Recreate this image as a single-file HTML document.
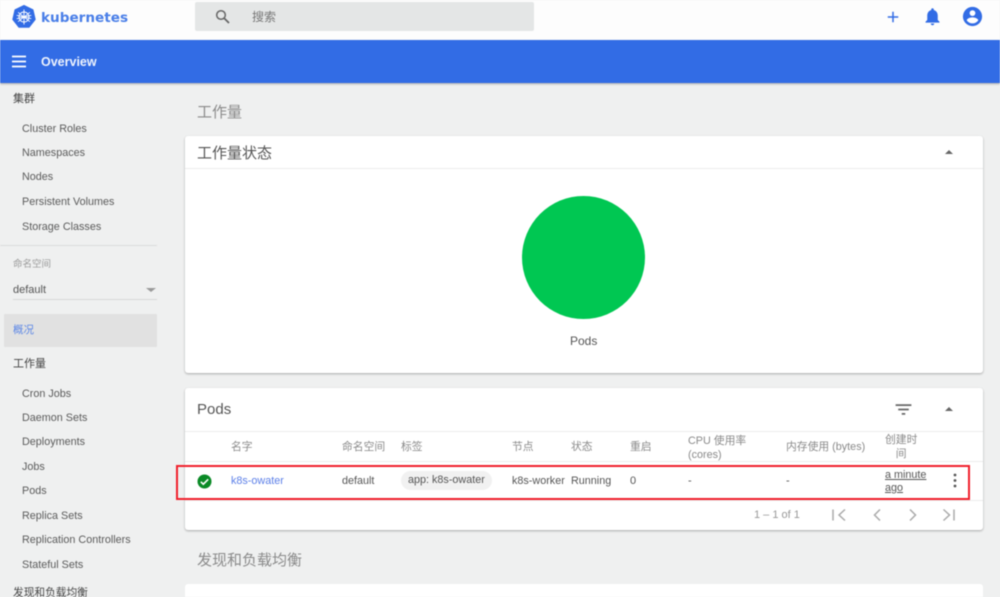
<!DOCTYPE html>
<html lang="zh"><head><meta charset="utf-8"><title>Kubernetes Dashboard</title>
<style>
html,body{margin:0;padding:0}
body{width:1000px;height:597px;overflow:hidden;position:relative;background:#eff0f0;font-family:"Liberation Sans","Noto Sans CJK SC",sans-serif;font-size:11px;color:#555}
#r{position:absolute;left:0;top:0;width:1000px;height:597px;overflow:hidden;filter:blur(.45px)}
.a,.a *{box-sizing:border-box}
.a{position:absolute;white-space:nowrap}
.side{color:#5b5b5b;font-size:10.800px;left:22px;line-height:14px;margin-top:1px}
.h{color:#444;font-size:11px;left:13px;line-height:14px}
.card{background:#fff;border-radius:3px;box-shadow:0 1px 2px rgba(0,0,0,.3)}
.th{color:#8a8a8a;font-size:10.800px;line-height:13px;margin-top:2px}
.td{color:#555;font-size:11px;line-height:14px;margin-top:1px}
</style></head><body><div id="r">
<div class="a" style="left:0;top:0;width:1000px;height:40px;background:#fdfdfd"></div>
<svg class="a" style="left:12px;top:5px" width="24" height="24" viewBox="0 0 24 24"><path d="M12 .5 21 4.800 23.200 14.500 17 22.300H7L.8 14.500 3 4.800Z" fill="#326ce5" stroke="#326ce5" stroke-linejoin="round"/><g stroke="#fff" fill="none" stroke-width=".9"><circle cx="12" cy="12" r="5"/><path d="M12 4.500V19.500M6.100 7.300 17.900 16.700M17.900 7.300 6.100 16.700M4.700 13.700 19.300 10.300M19.300 13.700 4.700 10.300"/></g><circle cx="12" cy="12" r="1.300" fill="#fff"/></svg>
<div class="a" style="left:41px;top:9px;font:bold 13.600px/18px 'DejaVu Sans',sans-serif;color:#4a7fe8">kubernetes</div>
<div class="a" style="left:195px;top:2px;width:339px;height:29px;background:#e4e6e6;border-radius:2px"></div>
<svg class="a" style="left:214px;top:8px" width="17" height="17" viewBox="0 0 17 17" fill="none" stroke="#666"><circle cx="7" cy="7" r="4.300" stroke-width="1.500"/><path d="M10.200 10.200 15 15" stroke-width="1.800"/></svg>
<div class="a" style="left:252px;top:10px;font-size:12px;line-height:15px;color:#777">搜索</div>
<svg class="a" style="left:884px;top:8px" width="18" height="18" viewBox="0 0 24 24"><path d="M19 13h-6v6h-2v-6H5v-2h6V5h2v6h6v2Z" fill="#326ce5"/></svg>
<svg class="a" style="left:922px;top:6px" width="21" height="21" viewBox="0 0 24 24"><path d="M12 22c1.100 0 2-.9 2-2h-4c0 1.100.9 2 2 2Zm6-6v-5c0-3.100-1.600-5.600-4.500-6.300V4c0-.8-.7-1.500-1.500-1.500S10.500 3.200 10.500 4v.7C7.600 5.400 6 7.900 6 11v5l-2 2v1h16v-1l-2-2Z" fill="#326ce5"/></svg>
<svg class="a" style="left:961px;top:5px" width="23" height="23" viewBox="0 0 24 24"><circle cx="12" cy="12" r="10" fill="#326ce5"/><circle cx="12" cy="8.500" r="3" fill="#fff"/><path d="M6 16c.03-2 4-3.100 6-3.100s5.970 1.100 6 3.100a7.200 7.200 0 0 1-12 0Z" fill="#fff"/></svg>

<div class="a" style="left:0;top:40px;width:1000px;height:43px;background:#326ce5;box-shadow:0 1px 2px rgba(0,0,0,.3)"></div>
<svg class="a" style="left:11px;top:55px" width="16" height="13" viewBox="0 0 16 13"><path d="M1 1.500H15M1 6.500H15M1 11.500H15" stroke="#fff" stroke-width="1.700"/></svg>
<div class="a" style="left:41px;top:54px;font:bold 12.500px/17px 'Liberation Sans',sans-serif;color:#eef3fd">Overview</div>

<div class="a h" style="top:92px">集群</div>
<div class="a side" style="top:121px">Cluster Roles</div>
<div class="a side" style="top:145px">Namespaces</div>
<div class="a side" style="top:169px">Nodes</div>
<div class="a side" style="top:194px">Persistent Volumes</div>
<div class="a side" style="top:218.500px">Storage Classes</div>
<div class="a" style="left:0;top:245px;width:157px;height:1px;background:#dcdcdc"></div>
<div class="a" style="left:13px;top:258px;font-size:9.500px;line-height:13px;color:#999">命名空间</div>
<div class="a" style="left:13px;top:283px;font-size:11px;line-height:14px;color:#555">default</div>
<div class="a" style="left:146px;top:288px;width:0;height:0;border-left:5px solid transparent;border-right:5px solid transparent;border-top:4px solid #999"></div>
<div class="a" style="left:13px;top:299px;width:144px;height:1px;background:#d8d8d8"></div>
<div class="a" style="left:4px;top:314px;width:153px;height:33px;background:#e1e1e1;border-radius:1px"></div>
<div class="a" style="left:13px;top:323px;font-size:10.500px;line-height:14px;color:#5b86e6">概况</div>
<div class="a h" style="top:357px">工作量</div>
<div class="a side" style="top:385.500px">Cron Jobs</div>
<div class="a side" style="top:410px">Daemon Sets</div>
<div class="a side" style="top:434px">Deployments</div>
<div class="a side" style="top:459px">Jobs</div>
<div class="a side" style="top:483px">Pods</div>
<div class="a side" style="top:508px">Replica Sets</div>
<div class="a side" style="top:532px">Replication Controllers</div>
<div class="a side" style="top:557px">Stateful Sets</div>
<div class="a h" style="top:586px;font-size:10.700px">发现和负载均衡</div>

<div class="a" style="left:197px;top:103px;font-size:15px;line-height:20px;color:#8a8a8a">工作量</div>
<div class="a card" style="left:185px;top:136px;width:798px;height:237px"></div>
<div class="a" style="left:197px;top:144px;font-size:15px;line-height:20px;color:#555">工作量状态</div>
<div class="a" style="left:185px;top:168px;width:798px;height:1px;background:#ececec"></div>
<div class="a" style="left:945px;top:150px;width:0;height:0;border-left:4.500px solid transparent;border-right:4.500px solid transparent;border-bottom:4.500px solid #666"></div>
<div class="a" style="left:522px;top:196px;width:123px;height:123px;border-radius:50%;background:#00c752"></div>
<div class="a" style="left:570px;top:334px;font-size:12px;line-height:15px;color:#555">Pods</div>

<div class="a card" style="left:185px;top:388px;width:798px;height:142px"></div>
<div class="a" style="left:197px;top:400px;font-size:15px;line-height:20px;color:#555">Pods</div>
<svg class="a" style="left:893px;top:399px" width="21" height="21" viewBox="0 0 24 24"><path d="M10 18h4v-2h-4v2ZM3 6v2h18V6H3Zm3 7h12v-2H6v2Z" fill="#666"/></svg>
<div class="a" style="left:945px;top:407px;width:0;height:0;border-left:4.500px solid transparent;border-right:4.500px solid transparent;border-bottom:4.500px solid #666"></div>
<div class="a" style="left:185px;top:431px;width:798px;height:1px;background:#ececec"></div>
<div class="a" style="left:185px;top:461px;width:798px;height:1px;background:#ececec"></div>
<div class="a" style="left:185px;top:500px;width:798px;height:1px;background:#ececec"></div>
<div class="a th" style="left:231px;top:439px">名字</div>
<div class="a th" style="left:342px;top:439px">命名空间</div>
<div class="a th" style="left:401px;top:439px">标签</div>
<div class="a th" style="left:512px;top:439px">节点</div>
<div class="a th" style="left:571px;top:439px">状态</div>
<div class="a th" style="left:630px;top:439px">重启</div>
<div class="a th" style="left:688px;top:432px;line-height:14px">CPU 使用率<br>(cores)</div>
<div class="a th" style="left:786px;top:439px">内存使用 (bytes)</div>
<div class="a th" style="left:885px;top:431px;text-align:center;line-height:14px">创建时<br>间</div>

<svg class="a" style="left:197px;top:474px" width="15" height="15" viewBox="0 0 15 15"><circle cx="7.500" cy="7.500" r="7" fill="#0a8a26"/><path d="M3.800 7.800 6.300 10.200 11.200 5.300" stroke="#fff" stroke-width="1.600" fill="none"/></svg>
<div class="a td" style="left:231px;top:473px;color:#5b7fe8;font-size:10.800px">k8s-owater</div>
<div class="a td" style="left:342px;top:473px;font-size:10.800px">default</div>
<div class="a" style="left:401px;top:471px;width:91px;height:19px;border-radius:10px;background:#f1f1f1"></div>
<div class="a td" style="left:408px;top:472px;font-size:10.800px">app: k8s-owater</div>
<div class="a td" style="left:512px;top:473px;font-size:10.800px">k8s-worker</div>
<div class="a td" style="left:571px;top:473px;font-size:10.800px">Running</div>
<div class="a td" style="left:630px;top:473px">0</div>
<div class="a td" style="left:688px;top:473px">-</div>
<div class="a td" style="left:786px;top:473px">-</div>
<div class="a td" style="left:885px;top:468px;line-height:13px;text-decoration:underline;font-size:10.800px">a minute<br>ago</div>
<svg class="a" style="left:953px;top:473px" width="4" height="15" viewBox="0 0 4 15"><circle cx="2" cy="2" r="1.400" fill="#555"/><circle cx="2" cy="7.500" r="1.400" fill="#555"/><circle cx="2" cy="13" r="1.400" fill="#555"/></svg>
<div class="a" style="left:176px;top:465px;width:794px;height:35px;border:2px solid #f0202c"></div>

<div class="a" style="left:754px;top:508px;font-size:11px;line-height:14px;color:#999">1 – 1 of 1</div>
<svg class="a" style="left:830px;top:506px;" width="130" height="18" viewBox="0 0 130 18" fill="none" stroke="#aaa" stroke-width="1.500"><path d="M3 3.500V14.500M15 3.500 9 9 15 14.500M50 3.500 44.500 9 50 14.500M80 3.500 85.500 9 80 14.500M113.500 3.500 119.500 9 113.500 14.500M124 3.500V14.500"/></svg>

<div class="a" style="left:197px;top:551px;font-size:15px;line-height:20px;color:#8a8a8a">发现和负载均衡</div>
<div class="a" style="left:185px;top:584px;width:798px;height:20px;background:#fff;border-radius:3px"></div>
</div></body></html>
